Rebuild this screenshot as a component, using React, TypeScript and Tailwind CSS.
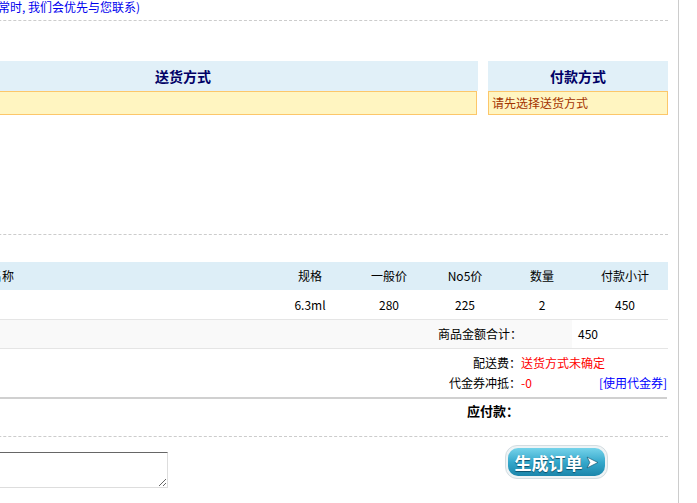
import React from 'react';

const cols = 'grid grid-cols-[382px_80px_78px_74px_80px_86px]';

export default function App() {
  return (
    <div className="w-[697px] h-[503px] overflow-hidden bg-white text-[12px] text-black font-['Noto_Sans_CJK_SC',sans-serif]">
      <div className="w-[679px] h-[503px] overflow-hidden border-r border-[#cccccc]">
        {/* page content is scrolled sideways, so shift it left */}
        <div className="ml-[-112px] w-[780px]">
          <div className="h-[21px] pl-[110px] pt-[1px] leading-[12px] text-[#0000ee] border-b border-dashed border-[#cccccc]">
            常时, 我们会优先与您联系)
          </div>

          {/* shipping / payment */}
          <div className="mt-[40px] flex gap-[10px]">
            <div className="w-[590px] flex flex-col">
              <div className="h-[30px] flex items-center justify-center bg-[#e1f0f8] text-[14px] font-bold text-[#000066]">
                送货方式
              </div>
              <div className="h-[24px] mr-[1px] border border-[#fcc76a] bg-[#fff5c1]" />
            </div>
            <div className="w-[180px] flex flex-col">
              <div className="h-[30px] flex items-center justify-center bg-[#e1f0f8] text-[14px] font-bold text-[#000066]">
                付款方式
              </div>
              <div className="h-[24px] flex items-center px-[3px] border border-[#fcc76a] bg-[#fff5c1] text-[#a33300]">
                请先选择送货方式
              </div>
            </div>
          </div>

          <div className="mt-[119px] border-t border-dashed border-[#cccccc]" />

          {/* goods table */}
          <div className={`mt-[27px] h-[28px] items-center bg-[#ddeef7] text-center ${cols}`}>
            <div className="text-left pl-[78px]">商品名称</div>
            <div>规格</div>
            <div>一般价</div>
            <div>No5价</div>
            <div>数量</div>
            <div>付款小计</div>
          </div>
          <div className={`h-[30px] items-center text-center border-b border-[#e5e5e5] ${cols}`}>
            <div />
            <div>6.3ml</div>
            <div>280</div>
            <div>225</div>
            <div>2</div>
            <div>450</div>
          </div>
          <div className="h-[29px] flex border-b border-[#e5e5e5]">
            <div className="w-[684px] flex items-center justify-end pr-[50px] bg-[#f9f9f9]">商品金额合计：</div>
            <div className="flex-1 flex items-center pl-[6px]">450</div>
          </div>

          {/* fees */}
          <div className="mt-[4px] flex flex-col">
            <div className="h-[20px] flex items-center">
              <div className="w-[633px] text-right">配送费：</div>
              <div className="text-[#ff0000]">送货方式未确定</div>
            </div>
            <div className="h-[20px] flex items-center">
              <div className="w-[633px] text-right">代金券冲抵：</div>
              <div className="flex-1 text-[#ff0000]">-0</div>
              <a className="pr-[1px] text-[#0000ff] cursor-pointer">[使用代金券]</a>
            </div>
          </div>
          <div className="mt-[4px] w-[779px] border-t-2 border-[#d0d0d0]" />
          <div className="mt-[2px] h-[20px] flex items-center">
            <div className="w-[631px] text-right font-bold text-[13px]">应付款：</div>
          </div>

          <div className="mt-[15px] border-t border-dashed border-[#cccccc]" />

          {/* remark + submit */}
          <div className="flex items-start">
            <textarea className="mt-[15px] ml-[20px] w-[260px] h-[36px] border border-[#dddddd] border-t-[#666666] bg-white" />
            <button
              type="button"
              className="mt-[8px] ml-[337px] w-[103px] h-[34px] rounded-[12px] p-[2px] bg-[#eef3f5] border border-[#d3dde1]"
            >
              <div className="h-full rounded-[10px] flex items-center justify-center gap-[3px] bg-gradient-to-b from-[#74d3ea] via-[#35a9cc] to-[#1a86ab] text-white text-[17px] font-bold leading-none [text-shadow:0_1px_1px_#0a4f6a]">
                <span>生成订单</span>
                <svg width="13" height="13" viewBox="0 0 12 12">
                  <path d="M1 1 L11 6 L1 11 L3.5 6 Z" fill="#ffffff" stroke="#0a4f6a" strokeWidth="0.6" />
                </svg>
              </div>
            </button>
          </div>
        </div>
      </div>
    </div>
  );
}
